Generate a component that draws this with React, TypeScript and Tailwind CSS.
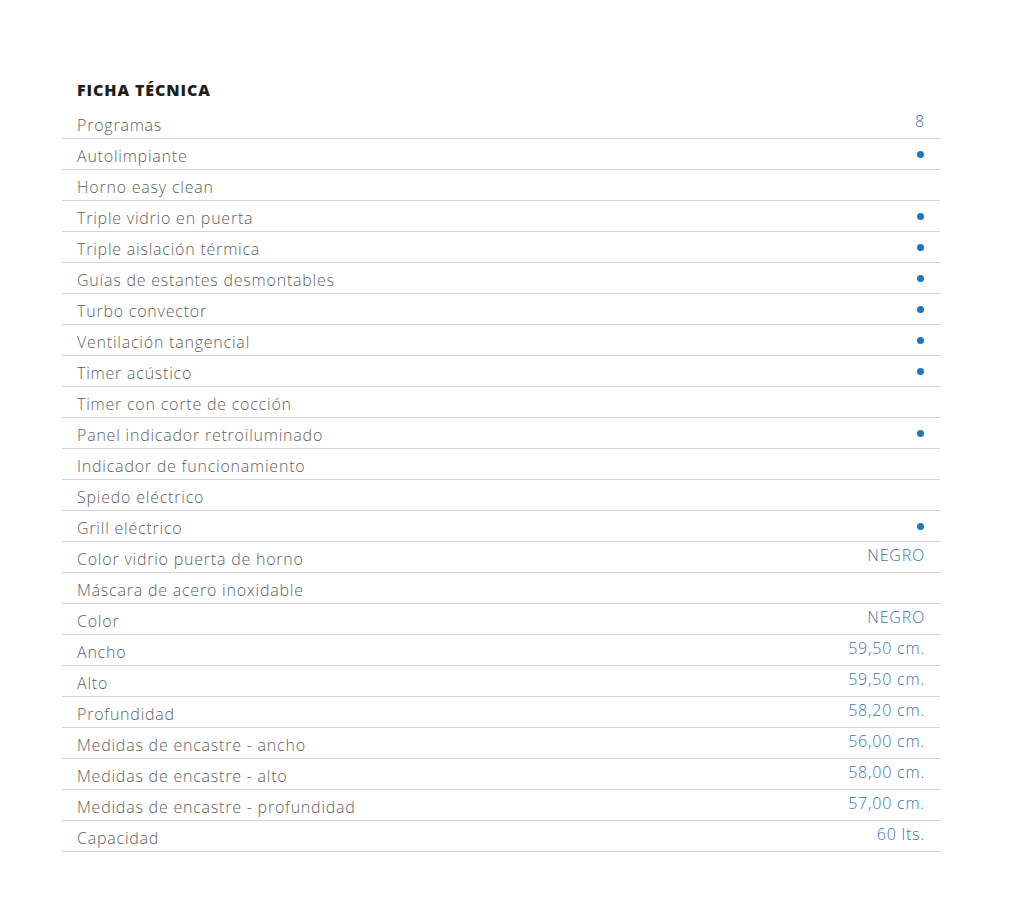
const rows: [string, string][] = [
  ["Programas", "8"],
  ["Autolimpiante", "•"],
  ["Horno easy clean", ""],
  ["Triple vidrio en puerta", "•"],
  ["Triple aislación térmica", "•"],
  ["Guías de estantes desmontables", "•"],
  ["Turbo convector", "•"],
  ["Ventilación tangencial", "•"],
  ["Timer acústico", "•"],
  ["Timer con corte de cocción", ""],
  ["Panel indicador retroiluminado", "•"],
  ["Indicador de funcionamiento", ""],
  ["Spiedo eléctrico", ""],
  ["Grill eléctrico", "•"],
  ["Color vidrio puerta de horno", "NEGRO"],
  ["Máscara de acero inoxidable", ""],
  ["Color", "NEGRO"],
  ["Ancho", "59,50 cm."],
  ["Alto", "59,50 cm."],
  ["Profundidad", "58,20 cm."],
  ["Medidas de encastre - ancho", "56,00 cm."],
  ["Medidas de encastre - alto", "58,00 cm."],
  ["Medidas de encastre - profundidad", "57,00 cm."],
  ["Capacidad", "60 lts."],
];

export default function App() {
  return (
    <div className="min-h-[924px] w-[1016px] bg-white font-['Open_Sans',sans-serif]">
      <div className="ml-[62px] w-[878px] pt-[80px]">
        <h2 className="pl-[15px] text-[16px] font-extrabold leading-[20px] tracking-[0.9px] text-[#1e1e1e]">
          FICHA TÉCNICA
        </h2>
        <div className="mt-[8px]">
          {rows.map(([label, value]) => (
            <div
              key={label}
              className="flex h-[31px] items-start justify-between border-b border-[#d4d4d4] px-[15px]"
            >
              <span className="pt-[6px] text-[16px] font-light leading-[22px] tracking-[0.78px] text-[#5f5f5f]">
                {label}
              </span>
              {value === "•" ? (
                <span className="mr-[1px] mt-[12px] h-[7px] w-[7px] rounded-full bg-[#1b78c0]" />
              ) : (
                <span className="pt-[2px] text-[16px] font-light leading-[22px] tracking-[0.8px] text-[#3b74ab]">
                  {value}
                </span>
              )}
            </div>
          ))}
        </div>
      </div>
    </div>
  );
}
